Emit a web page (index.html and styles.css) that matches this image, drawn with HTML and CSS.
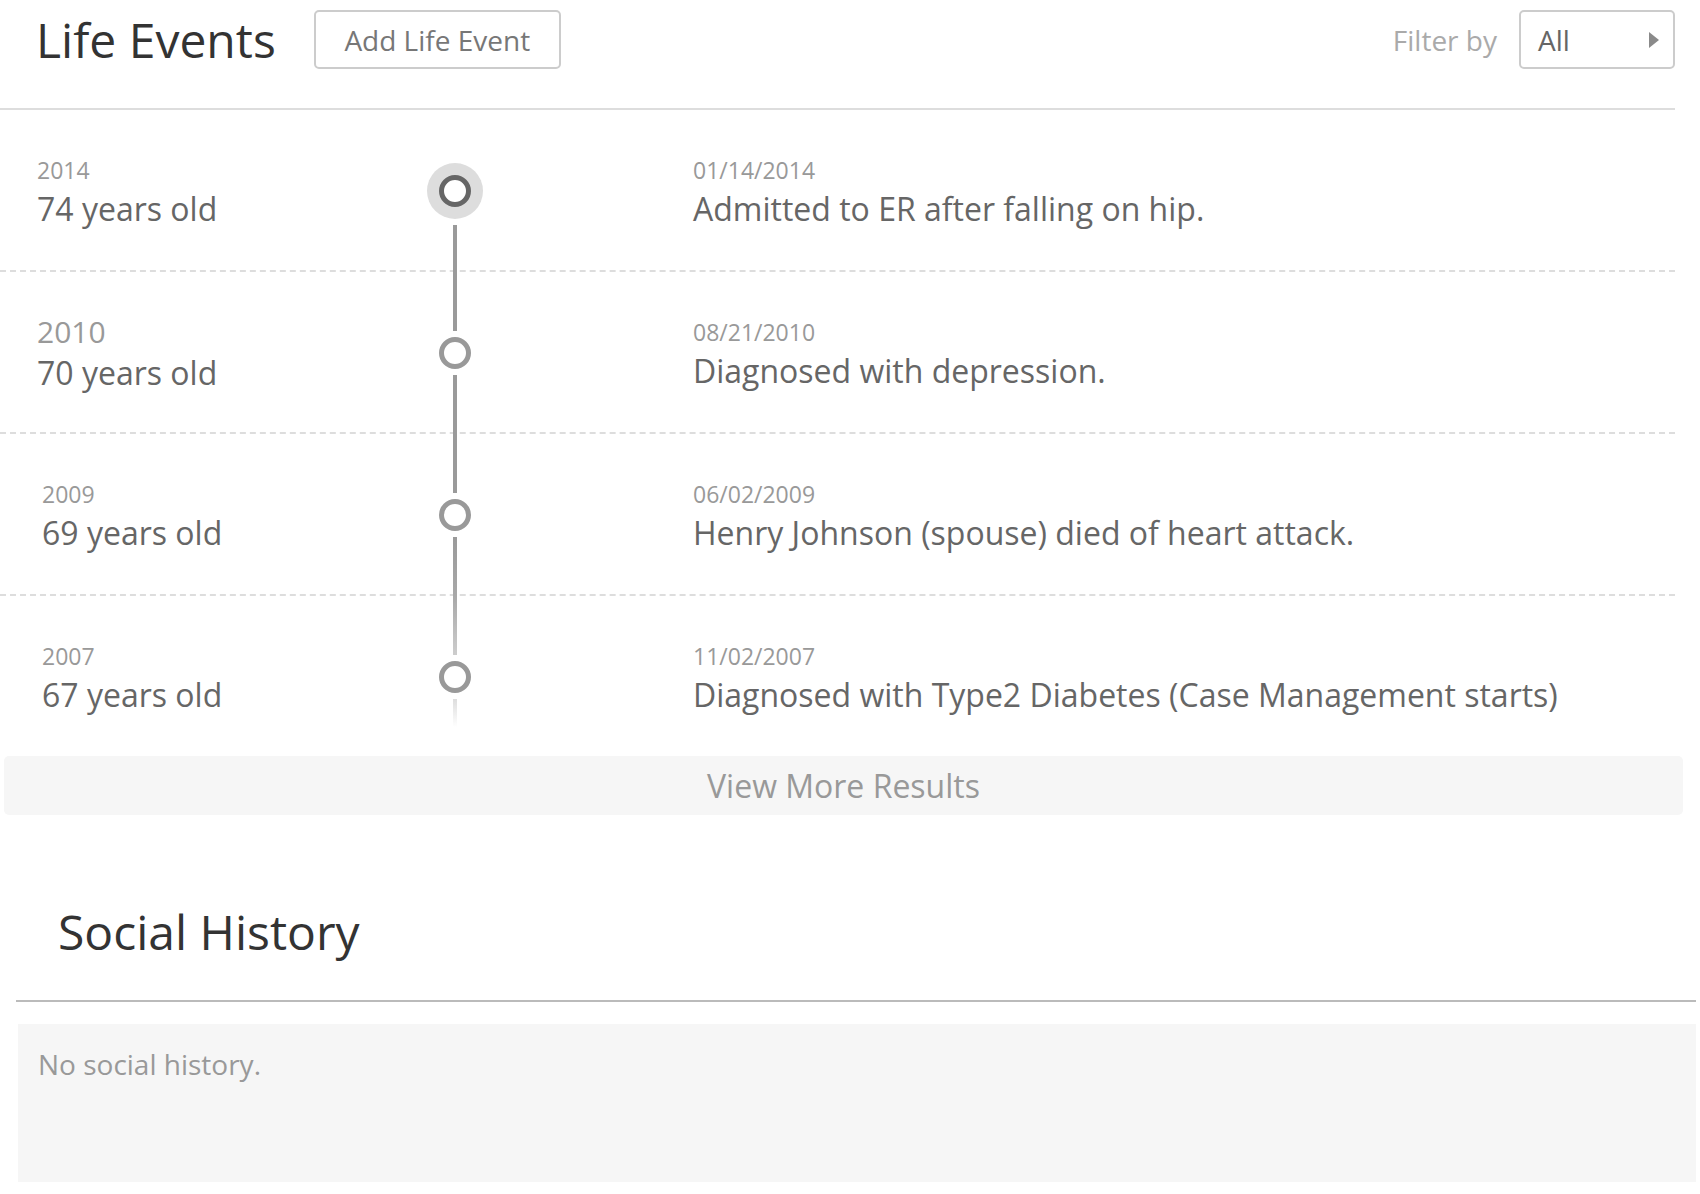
FILE: index.html
```html
<!DOCTYPE html>
<html lang="en">
<head>
<meta charset="utf-8">
<title>Life Events</title>
<link rel="stylesheet" href="styles.css">
</head>
<body>
<div class="page">
  <section class="life-events">
    <header class="section-header">
      <h1 class="section-title">Life Events</h1>
      <button class="btn-outline" type="button">Add Life Event</button>
      <div class="filter">
        <span class="filter-label">Filter by</span>
        <div class="select">
          <span class="select-value">All</span>
          <svg class="select-caret" width="10" height="16" viewBox="0 0 10 16"><polygon points="0,0 10,8 0,16" fill="#8a8a8a"/></svg>
        </div>
      </div>
    </header>

    <div class="timeline">
      <div class="event-row">
        <div class="age-col">
          <div class="year">2014</div>
          <div class="age">74 years old</div>
        </div>
        <div class="marker-col">
          <span class="seg seg-top seg-hidden"></span>
          <span class="halo"><span class="ring ring-active"></span></span>
          <span class="seg seg-bottom"></span>
        </div>
        <div class="desc-col">
          <div class="date">01/14/2014</div>
          <div class="desc">Admitted to ER after falling on hip.</div>
        </div>
      </div>

      <div class="event-row">
        <div class="age-col">
          <div class="year year-large">2010</div>
          <div class="age">70 years old</div>
        </div>
        <div class="marker-col">
          <span class="seg seg-top"></span>
          <span class="ring"></span>
          <span class="seg seg-bottom"></span>
        </div>
        <div class="desc-col">
          <div class="date">08/21/2010</div>
          <div class="desc">Diagnosed with depression.</div>
        </div>
      </div>

      <div class="event-row">
        <div class="age-col age-col-indent">
          <div class="year">2009</div>
          <div class="age">69 years old</div>
        </div>
        <div class="marker-col">
          <span class="seg seg-top"></span>
          <span class="ring"></span>
          <span class="seg seg-bottom seg-fade-1"></span>
        </div>
        <div class="desc-col">
          <div class="date">06/02/2009</div>
          <div class="desc">Henry Johnson (spouse) died of heart attack.</div>
        </div>
      </div>

      <div class="event-row event-row-last">
        <div class="age-col age-col-indent">
          <div class="year">2007</div>
          <div class="age">67 years old</div>
        </div>
        <div class="marker-col">
          <span class="seg seg-top seg-fade-2"></span>
          <span class="ring"></span>
          <span class="seg-tail-wrap"><span class="seg-tail"></span></span>
        </div>
        <div class="desc-col">
          <div class="date">11/02/2007</div>
          <div class="desc">Diagnosed with Type2 Diabetes (Case Management starts)</div>
        </div>
      </div>
    </div>
  </section>

  <button class="view-more" type="button">View More Results</button>

  <section class="social-history">
    <h2 class="social-title">Social History</h2>
    <div class="social-body">No social history.</div>
  </section>
</div>
</body>
</html>
```

FILE: styles.css
```css
* { box-sizing: border-box; }

html, body {
  margin: 0;
  padding: 0;
  background: #ffffff;
}

body {
  font-family: "Open Sans", "Noto Sans", "Liberation Sans", sans-serif;
  color: #666666;
}

.page {
  width: 1700px;
}

/* ---------- Life events ---------- */
.life-events {
  width: 1675px;
}

.section-header {
  display: flex;
  align-items: center;
  height: 110px;
  padding: 10px 0 39px 36px;
  border-bottom: 2px solid #dddddd;
}

.section-title {
  margin: 0;
  font-size: 48px;
  font-weight: 400;
  line-height: 59px;
  color: #333333;
}

.btn-outline {
  margin-left: 38px;
  width: 247px;
  height: 59px;
  border: 2px solid #cccccc;
  border-radius: 5px;
  background: #ffffff;
  font-family: inherit;
  font-size: 28px;
  color: #777777;
  padding: 0;
  cursor: pointer;
}

.filter {
  margin-left: auto;
  display: flex;
  align-items: center;
}

.filter-label {
  font-size: 28px;
  color: #aaaaaa;
  margin-right: 22px;
}

.select {
  width: 156px;
  height: 59px;
  border: 2px solid #cccccc;
  border-radius: 5px;
  display: flex;
  align-items: center;
  padding: 0 14px 0 17px;
}

.select-value {
  font-size: 28px;
  color: #666666;
}

.select-caret {
  margin-left: auto;
}

/* ---------- Timeline ---------- */
.event-row {
  display: flex;
  height: 162px;
  border-bottom: 2px dashed #dddddd;
}

.event-row-last {
  border-bottom: none;
  height: 160px;
}

.age-col {
  width: 425px;
  padding-left: 37px;
  display: flex;
  flex-direction: column;
  justify-content: center;
  padding-top: 6px;
}

.age-col-indent {
  padding-left: 42px;
}

.year {
  font-size: 23px;
  line-height: 32px;
  color: #999999;
}

.year-large {
  font-size: 30px;
  line-height: 36px;
}

.age {
  font-size: 32px;
  line-height: 46px;
  color: #666666;
}

.marker-col {
  width: 60px;
  display: flex;
  flex-direction: column;
  align-items: center;
  margin-bottom: -2px;
}

.seg {
  flex: 1;
  width: 4px;
  background: #9a9a9a;
}

.seg-top { margin-bottom: 6px; }
.seg-bottom { margin-top: 6px; }

.seg-hidden { background: transparent; }

.seg-fade-1 {
  background: linear-gradient(#9a9a9a, #a8a8a8);
}

.seg-fade-2 {
  background: linear-gradient(#a8a8a8, #cdcdcd);
}

.seg-tail-wrap {
  flex: 1;
  margin-top: 6px;
  width: 4px;
}

.seg-tail {
  display: block;
  width: 4px;
  height: 28px;
  background: linear-gradient(#dddddd, rgba(255, 255, 255, 0));
}

.halo {
  width: 56px;
  height: 56px;
  border-radius: 50%;
  background: #dddddd;
  display: flex;
  align-items: center;
  justify-content: center;
  flex: none;
}

.ring {
  flex: none;
  width: 32px;
  height: 32px;
  border-radius: 50%;
  border: 5px solid #999999;
  background: #ffffff;
}

.ring-active {
  border-color: #666666;
}

.desc-col {
  flex: 1;
  padding-left: 208px;
  display: flex;
  flex-direction: column;
  justify-content: center;
  padding-top: 6px;
}

.date {
  font-size: 23px;
  line-height: 32px;
  color: #999999;
}

.desc {
  font-size: 32px;
  line-height: 46px;
  color: #666666;
}

/* ---------- View more ---------- */
.view-more {
  display: block;
  width: 1679px;
  height: 59px;
  margin: 0 0 0 4px;
  border: none;
  border-radius: 5px;
  background: #f6f6f6;
  font-family: inherit;
  font-size: 32px;
  color: #999999;
  padding: 0;
  cursor: pointer;
}

/* ---------- Social history ---------- */
.social-history {
  margin: 85px 4px 0 16px;
}

.social-title {
  margin: 0;
  padding: 0 0 36px 42px;
  font-size: 48px;
  font-weight: 400;
  line-height: 64px;
  color: #333333;
  border-bottom: 2px solid #bbbbbb;
}

.social-body {
  margin: 22px 0 0 2px;
  height: 158px;
  background: #f6f6f6;
  padding: 20px 20px;
  font-size: 28px;
  line-height: 40px;
  color: #999999;
}
```
